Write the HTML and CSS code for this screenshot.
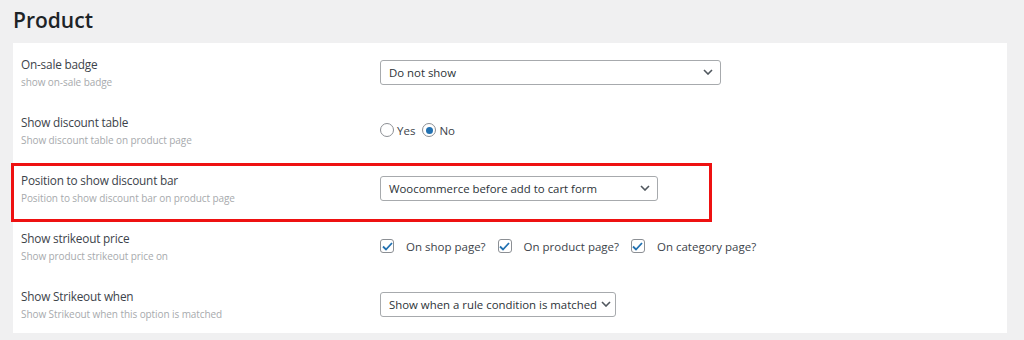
FILE: index.html
```html
<!DOCTYPE html>
<html lang="en">
<head>
    <meta charset="UTF-8">
    <meta name="viewport" content="width=device-width, initial-scale=1.0">
    <title>Product settings</title>
    <link rel="stylesheet" href="styles.css">
</head>
<body>
    <h1 class="page-title">Product</h1>

    <div class="panel">
        <div class="row">
            <div class="label">
                <div class="title">On-sale badge</div>
                <div class="desc">show on-sale badge</div>
            </div>
            <div class="field">
                <div class="select select-wide">
                    <span>Do not show</span>
                    <svg class="chevron" width="10" height="6" viewBox="0 0 10 6"><path d="M1 1l4 4 4-4" fill="none" stroke="#50575e" stroke-width="1.6"/></svg>
                </div>
            </div>
        </div>

        <div class="row">
            <div class="label">
                <div class="title">Show discount table</div>
                <div class="desc">Show discount table on product page</div>
            </div>
            <div class="field">
                <label class="radio"><span class="circle"></span>Yes</label>
                <label class="radio"><span class="circle checked"></span>No</label>
            </div>
        </div>

        <div class="row highlighted">
            <div class="label">
                <div class="title">Position to show discount bar</div>
                <div class="desc">Position to show discount bar on product page</div>
            </div>
            <div class="field">
                <div class="select select-mid">
                    <span>Woocommerce before add to cart form</span>
                    <svg class="chevron" width="10" height="6" viewBox="0 0 10 6"><path d="M1 1l4 4 4-4" fill="none" stroke="#50575e" stroke-width="1.6"/></svg>
                </div>
            </div>
            <div class="marker"></div>
        </div>

        <div class="row">
            <div class="label">
                <div class="title">Show strikeout price</div>
                <div class="desc">Show product strikeout price on</div>
            </div>
            <div class="field checks">
                <label class="check"><span class="box"><svg width="11" height="9" viewBox="0 0 11 9"><path d="M1 4.5l3 3 6-6.5" fill="none" stroke="#2271b1" stroke-width="1.8"/></svg></span>On shop page?</label>
                <label class="check"><span class="box"><svg width="11" height="9" viewBox="0 0 11 9"><path d="M1 4.5l3 3 6-6.5" fill="none" stroke="#2271b1" stroke-width="1.8"/></svg></span>On product page?</label>
                <label class="check"><span class="box"><svg width="11" height="9" viewBox="0 0 11 9"><path d="M1 4.5l3 3 6-6.5" fill="none" stroke="#2271b1" stroke-width="1.8"/></svg></span>On category page?</label>
            </div>
        </div>

        <div class="row">
            <div class="label">
                <div class="title">Show Strikeout when</div>
                <div class="desc">Show Strikeout when this option is matched</div>
            </div>
            <div class="field">
                <div class="select select-short">
                    <span>Show when a rule condition is matched</span>
                    <svg class="chevron" width="10" height="6" viewBox="0 0 10 6"><path d="M1 1l4 4 4-4" fill="none" stroke="#50575e" stroke-width="1.6"/></svg>
                </div>
            </div>
        </div>
    </div>
</body>
</html>
```

FILE: styles.css
```css
body {
    font-family: "Open Sans", "Noto Sans", sans-serif;
    background-color: #f0f0f1;
    color: #3c434a;
    margin: 0;
    padding: 0 13px;
}
.page-title {
    font-size: 21px;
    font-weight: 600;
    color: #1d2327;
    line-height: 28px;
    margin: 6px 0 9px;
}
.panel {
    background-color: #fff;
    width: 994px;
}
.row {
    position: relative;
    display: grid;
    grid-template-columns: 359px 1fr;
    align-items: center;
    height: 58px;
    padding: 0 8px;
}
.title {
    font-size: 11.8px;
    letter-spacing: -0.2px;
    line-height: 20px;
    color: #3c434a;
}
.desc {
    font-size: 10px;
    letter-spacing: -0.08px;
    line-height: 16px;
    color: #a7aaad;
}
.field {
    display: flex;
    align-items: center;
    font-size: 11.5px;
    color: #3c434a;
}
.select {
    display: flex;
    align-items: center;
    justify-content: space-between;
    box-sizing: border-box;
    height: 25px;
    padding: 0 7px 0 8px;
    border: 1px solid #a7aaad;
    border-radius: 3px;
    font-size: 11.4px;
    color: #2c3338;
    white-space: nowrap;
}
.select-wide { width: 341px; }
.select-mid { width: 278px; }
.select-short { width: 236px; }
.chevron {
    flex-shrink: 0;
    margin-left: 4px;
}
.radio {
    display: flex;
    align-items: center;
    margin-right: 7px;
}
.circle {
    box-sizing: border-box;
    width: 14px;
    height: 14px;
    border: 1px solid #8c8f94;
    border-radius: 50%;
    margin-right: 3px;
    display: flex;
    align-items: center;
    justify-content: center;
}
.circle.checked::after {
    content: "";
    width: 7px;
    height: 7px;
    border-radius: 50%;
    background-color: #2271b1;
}
.checks {
    gap: 12px;
}
.check {
    display: flex;
    align-items: center;
    gap: 12px;
}
.box {
    box-sizing: border-box;
    width: 14px;
    height: 14px;
    border: 1px solid #8c8f94;
    border-radius: 3px;
    display: flex;
    align-items: center;
    justify-content: center;
}
.marker {
    position: absolute;
    left: -2px;
    top: 4px;
    width: 701px;
    height: 59px;
    box-sizing: border-box;
    border: 3px solid #ee1111;
    pointer-events: none;
}
```
